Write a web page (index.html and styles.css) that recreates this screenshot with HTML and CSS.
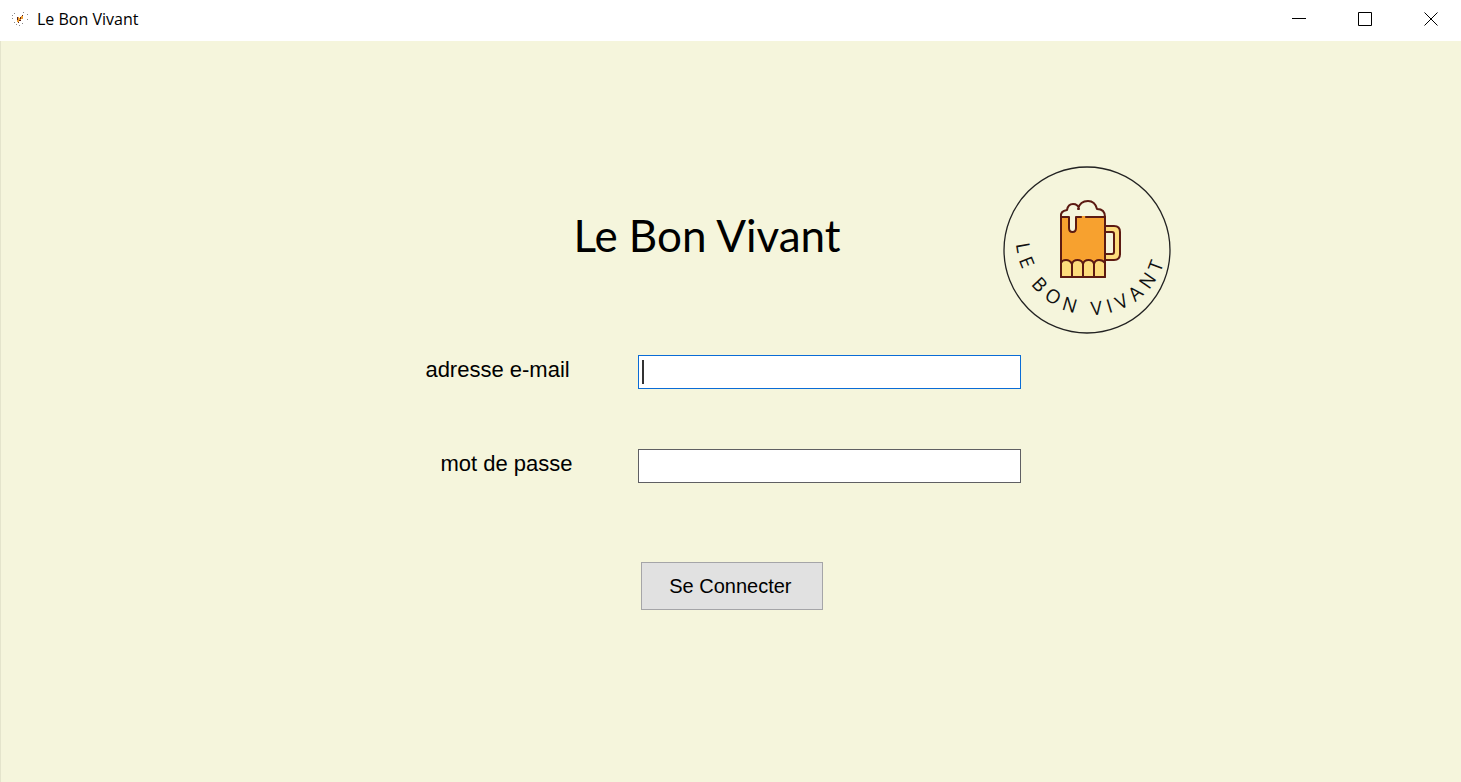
FILE: index.html
```html
<!DOCTYPE html>
<html lang="fr">
<head>
<meta charset="utf-8">
<title>Le Bon Vivant</title>
<link rel="stylesheet" href="styles.css">
</head>
<body>
<header class="titlebar">
  <svg class="app-icon" viewBox="0 0 18 18" aria-hidden="true">
    <path d="M6 7h2v5H6zM8 8h2v3H8zM10 6h2v3h-2z" fill="#f0a030"/>
    <path d="M6 7h1v3H6zM8 10h2v1H8zM9 7h1v2H9zM11 5h1v1h-1zM7 12h1v1H7z" fill="#5a2018"/>
    <path d="M1 5h1v1H1zM3 3h1v1H3zM1 8h1v1H1zM3 12h1v1H3zM5 14h1v1H5zM8 15h1v1H8zM12 2h1v1h-1zM16 4h1v1h-1zM16 9h1v1h-1zM11 13h1v1h-1z" fill="#888"/>
  </svg>
  <span class="window-name">Le Bon Vivant</span>
  <div class="window-controls">
    <button class="control" type="button" aria-label="Réduire"><svg viewBox="0 0 14 14"><path d="M0 6.500h14"/></svg></button>
    <button class="control" type="button" aria-label="Agrandir"><svg viewBox="0 0 14 14"><path d="M.5.5h13v13H.5z"/></svg></button>
    <button class="control" type="button" aria-label="Fermer"><svg viewBox="0 0 14 14"><path d="M.5.5l13 13M13.500.5l-13 13"/></svg></button>
  </div>
</header>
<main class="screen">
  <div class="login">
    <div class="brand">
      <h1 class="brand-name">Le Bon Vivant</h1>
      <svg class="logo" viewBox="0 0 168 168" role="img" aria-label="Le Bon Vivant">
        <circle cx="84" cy="84" r="83" fill="none" stroke="#222" stroke-width="1.300"/>
        <g stroke="#5c1a12" stroke-width="2" stroke-linejoin="round" stroke-linecap="round">
          <path d="M102 60h9q6 0 6 6v22q0 6-6 6h-9v-6h7q2 0 2-2V68q0-2-2-2h-7z" fill="#fddc7c"/>
          <path d="M58 51h44v60H58z" fill="#f7a12f"/>
          <path d="M58 111V97q1-3 5-3t6 4q1-4 5.500-4t5.500 4q1-4 5.500-4t5.500 4q1-4 5-4t6 3v14z" fill="#fddc7c"/>
          <path d="M69 98v13M80 98v13M91 98v13" fill="none"/>
          <path d="M58 50q0-5 6-6 1-6 6-6 4 0 6 4 2-7 9-7 7 0 9 8 8 0 8 7z" fill="#f5f5dc" stroke="none"/>
          <path d="M66 49v13q0 4 3.500 4t3.500-4V49z" fill="#f5f5dc" stroke="none"/>
          <path d="M79 51h3" stroke="#f7a12f"/>
          <path d="M102 51H83M78 51h-5v11q0 4-3.500 4T66 62V51h-8q-1-6 6-7 1-6 6-6 5 0 6 5M75 43q2-8 10-8 7 0 9 8 8 0 8 8" fill="none"/>
        </g>
        <path id="arc" d="M13 73a76 76 0 0 0 152 0" fill="none"/>
        <text class="logo-text"><textPath href="#arc" startOffset="5">LE BON VIVANT</textPath></text>
      </svg>
    </div>
    <form class="fields">
      <label class="field-label" for="email">adresse e-mail</label>
      <input class="field active" id="email" type="email">
      <label class="field-label indent" for="password">mot de passe</label>
      <input class="field" id="password" type="password">
      <button class="submit" type="button">Se Connecter</button>
    </form>
  </div>
</main>
</body>
</html>
```
FILE: styles.css
```css
* { box-sizing: border-box; }
body {
  margin: 0;
  min-height: 100vh;
  display: flex;
  flex-direction: column;
  background: #f5f5dc;
  color: #000;
  font-family: "Liberation Sans", Arial, sans-serif;
}
.titlebar {
  display: flex;
  align-items: center;
  height: 41px;
  padding: 0 0 3px 11px;
  background: #fff;
}
.app-icon { width: 18px; height: 18px; margin-right: 8px; }
.window-name { font: 16px/24px "Segoe UI", "Open Sans", sans-serif; }
.window-controls { display: flex; margin-left: auto; }
.control {
  display: grid;
  place-items: center;
  width: 66px;
  height: 38px;
  padding: 0 0 0 6px;
  border: 0;
  background: none;
}
.control svg { width: 14px; height: 14px; fill: none; stroke: #000; }
.screen {
  flex: 1;
  display: grid;
  grid-template-columns: 425fr 746px 290fr;
  align-items: start;
  padding-top: 125px;
  border-left: 1px solid #e4e4cc;
}
.login { grid-column: 2; }
.brand {
  display: flex;
  justify-content: space-between;
  align-items: flex-start;
  padding-left: 148px;
}
.brand-name {
  margin: 39px 0 0;
  font: 400 44px/60px "Ink Free", Lato, sans-serif;
}
.logo { width: 168px; height: 168px; }
.logo-text { font: 19px "Open Sans", sans-serif; letter-spacing: 6px; fill: #111; }
.fields {
  display: grid;
  grid-template-columns: 213px 383px;
  row-gap: 60px;
  margin-top: 21px;
}
.field-label { font-size: 22px; line-height: 30px; }
.indent { padding-left: 15px; }
.field {
  width: 100%;
  height: 34px;
  padding: 0 4px;
  border: 1px solid #5f5f63;
  border-radius: 0;
  background: #fff;
  font: 22px "Liberation Sans", Arial, sans-serif;
  outline: 0;
}
.active {
  border-color: #0a6cd6;
  background: linear-gradient(#333, #333) 3px 4px / 2px 24px no-repeat #fff;
}
.submit {
  grid-column: 2;
  justify-self: start;
  width: 182px;
  height: 48px;
  margin: 19px 0 0 3px;
  padding: 0 4px 0 0;
  border: 1px solid #a5a5a8;
  background: #e1e1e1;
  color: #000;
  font: 20px "Liberation Sans", Arial, sans-serif;
}
```
